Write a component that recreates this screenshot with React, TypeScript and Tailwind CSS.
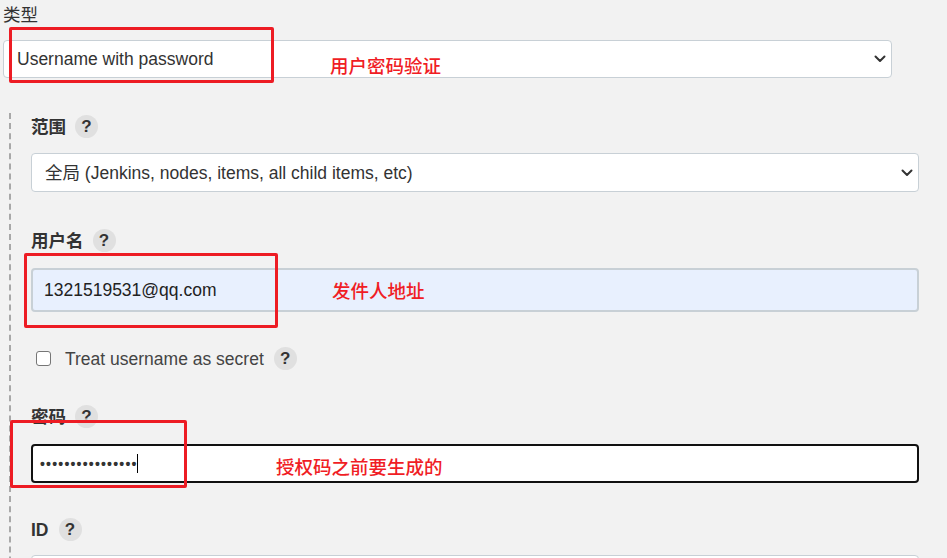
import React from 'react';

const Help: React.FC = () => (
  <span className="inline-flex items-center justify-center w-[23px] h-[23px] rounded-full bg-[#e0e0e0] text-[#333] text-[17px] font-bold leading-none">
    ?
  </span>
);

const Chevron: React.FC = () => (
  <svg width="12" height="8" viewBox="0 0 12 8" className="shrink-0">
    <path d="M1.5 1.5 L6 6 L10.5 1.5" fill="none" stroke="#333" strokeWidth="2" strokeLinecap="round" strokeLinejoin="round" />
  </svg>
);

const Label: React.FC<{ text: string }> = ({ text }) => (
  <div className="flex items-center gap-[9px] h-[23px]">
    <span className="text-[17.5px] font-bold text-[#333] leading-[20px]">{text}</span>
    <Help />
  </div>
);

const SelectBox: React.FC<{ text: string; className?: string }> = ({ text, className = '' }) => (
  <div className={`flex items-center justify-between bg-white border border-[#c8d0d6] rounded-[4px] pr-[5px] ${className}`}>
    <span className="text-[17.5px] text-[#333] leading-[20px]">{text}</span>
    <Chevron />
  </div>
);

const Note: React.FC<{ text: string; className: string }> = ({ text, className }) => (
  <span className={`absolute text-[18.5px] leading-[20px] font-medium text-[#f01d25] whitespace-nowrap ${className}`}>
    {text}
  </span>
);

const App: React.FC = () => {
  return (
    <div
      className="relative w-[947px] h-[558px] overflow-hidden bg-[#f2f2f2] pt-[5px]"
      style={{ fontFamily: '"Liberation Sans", "Noto Sans CJK SC", sans-serif' }}
    >
      <div className="pl-[3px] text-[17.5px] leading-[20px] text-[#333]">类型</div>
      <SelectBox text="Username with password" className="ml-[3px] mt-[15px] w-[889px] h-[38px] pl-[13px]" />

      <div className="ml-[9px] mt-[35px] border-l-2 border-dashed border-[#a8a8a8] pl-[20px] pr-[28px] pt-[2px] pb-[20px]">
        <Label text="范围" />
        <SelectBox text="全局 (Jenkins, nodes, items, all child items, etc)" className="mt-[15px] h-[39px] pl-[13px]" />

        <div className="mt-[37px]">
          <Label text="用户名" />
        </div>
        <div className="mt-[16px] h-[44px] flex items-center bg-[#e8f0fe] border-2 border-[#c8d0d6] rounded-[4px] pl-[11px]">
          <span className="text-[17.5px] text-[#222] leading-[20px]">1321519531@qq.com</span>
        </div>

        <div className="mt-[35px] h-[23px] flex items-center">
          <span className="ml-[5px] w-[15px] h-[15px] rounded-[3px] border border-[#767676] bg-white shrink-0" />
          <span className="ml-[14px] text-[17.5px] text-[#444] leading-[20px]">Treat username as secret</span>
          <span className="ml-[10px]"><Help /></span>
        </div>

        <div className="mt-[35px]">
          <Label text="密码" />
        </div>
        <div className="mt-[16px] h-[39px] flex items-center bg-white border-2 border-[#111] rounded-[4px] pl-[7px]">
          <span className="text-[14px] font-bold text-[#333] leading-[20px] tracking-[1.2px]">••••••••••••••••</span>
          <span className="w-px h-[19px] bg-black -ml-[1px]" />
        </div>

        <div className="mt-[35px]">
          <div className="flex items-center gap-[10px] h-[23px]">
            <span className="text-[17.5px] font-bold text-[#333] leading-[20px]">ID</span>
            <Help />
          </div>
        </div>
        <div className="mt-[14px] h-[38px] bg-white border border-[#c8d0d6] rounded-[4px]" />
      </div>

      {/* annotation boxes */}
      <div className="absolute left-[9px] top-[27px] w-[265px] h-[56px] border-[3px] border-[#ed1c24] rounded-[2px]" />
      <div className="absolute left-[24px] top-[253px] w-[254px] h-[75px] border-[3px] border-[#ed1c24] rounded-[2px]" />
      <div className="absolute left-[10px] top-[420px] w-[177px] h-[68px] border-[3px] border-[#ed1c24] rounded-[2px]" />

      <Note text="用户密码验证" className="left-[330px] top-[57px]" />
      <Note text="发件人地址" className="left-[332px] top-[282px]" />
      <Note text="授权码之前要生成的" className="left-[276px] top-[458px]" />
    </div>
  );
};

export default App;
